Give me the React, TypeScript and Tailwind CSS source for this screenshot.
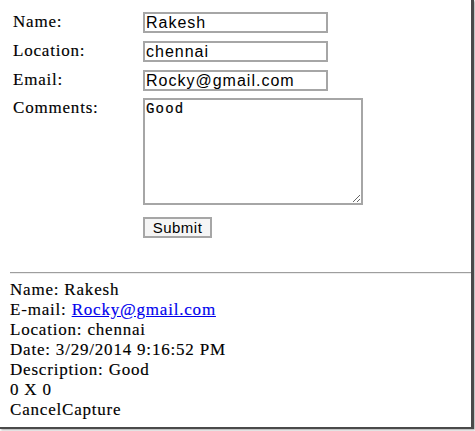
import React from 'react';

const serif = "font-['Liberation_Serif','Times_New_Roman',serif] [-webkit-text-stroke:0.15px_black]";
const sans = "font-['Liberation_Sans',Arial,sans-serif]";

interface FieldRowProps {
  label: string;
  children: React.ReactNode;
  className?: string;
};

const FieldRow = ({ label, children, className = '' }: FieldRowProps) => (
  <div className={`flex items-start ${className}`}>
    <div className={`w-[130px] ${serif} text-[17px] leading-[20px] tracking-[0.8px] text-black`}>
      {label}
    </div>
    {children}
  </div>
);

const inputCls = `w-[185px] h-[21px] border-2 border-[#a6a6a6] bg-white pl-[1px] ${sans} text-[16px] tracking-[1px] text-black outline-none`;

export default function App() {
  const details = [
    'Name: Rakesh',
    null,
    'Location: chennai',
    'Date: 3/29/2014 9:16:52 PM',
    'Description: Good',
    '0 X 0',
    'CancelCapture',
  ];

  return (
    <div className="w-[475px] h-[431px] bg-white">
      <div className="w-[474px] h-[429px] border-r-[3px] border-b-[2px] border-[#4a4a4a] shadow-[1px_1px_2px_rgba(0,0,0,0.35)]">
        {/* form */}
        <div className="pl-[13px] pt-[12px]">
          <FieldRow label="Name:">
            <input className={inputCls} defaultValue="Rakesh" />
          </FieldRow>
          <FieldRow label="Location:" className="mt-[8px]">
            <input className={inputCls} defaultValue="chennai" />
          </FieldRow>
          <FieldRow label="Email:" className="mt-[8px]">
            <input className={inputCls} defaultValue="Rocky@gmail.com" />
          </FieldRow>
          <FieldRow label="Comments:" className="mt-[7px]">
            <textarea
              className="w-[220px] h-[107px] border-2 border-[#a6a6a6] bg-white p-[1px] font-['Liberation_Mono','Courier_New',monospace] text-[14px] leading-[16px] tracking-[1.2px] text-black outline-none [-webkit-text-stroke:0.2px_black]"
              defaultValue="Good"
            />
          </FieldRow>
          <div className="flex mt-[12px]">
            <div className="w-[130px]" />
            <button className={`w-[69px] h-[21px] border-2 border-[#a6a6a6] bg-[#f5f5f5] ${sans} text-[15px] leading-[17px] tracking-[0.5px] text-black`}>
              Submit
            </button>
          </div>
        </div>

        {/* divider */}
        <div className="ml-[10px] mt-[34px] border-t border-b border-t-[#9e9e9e] border-b-[#ececec]" />

        {/* result */}
        <div className={`pl-[10px] pt-[6px] ${serif} text-[17px] leading-[20px] tracking-[0.8px] text-black`}>
          {details.map((line, i) =>
            line === null ? (
              <div key={i}>
                E-mail: <a href="#" className="text-[#0000ee] underline [-webkit-text-stroke:0.15px_#0000ee]">Rocky@gmail.com</a>
              </div>
            ) : (
              <div key={i}>{line}</div>
            )
          )}
        </div>
      </div>
    </div>
  );
}
